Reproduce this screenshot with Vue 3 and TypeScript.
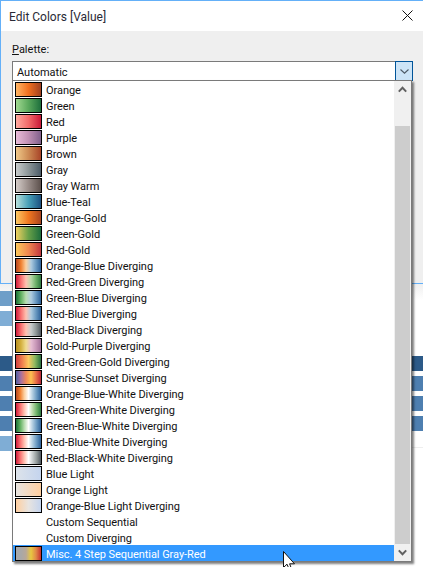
<template>
  <div class="screen">
    <section class="dialog">
      <header class="title-bar">
        <span class="title">Edit Colors [Value]</span>
        <svg class="close" width="11" height="11" viewBox="0 0 11 11">
          <path d="M0.5 0.5L10.5 10.5M10.5 0.5L0.5 10.5" stroke="#111" stroke-width="1" fill="none" />
        </svg>
      </header>
      <div class="body">
        <label class="field-label"><u>P</u>alette:</label>
        <div class="combo">
          <span class="combo-value">Automatic</span>
          <span class="combo-button">
            <svg width="9" height="5" viewBox="0 0 9 5">
              <path d="M0.5 0.5L4.5 4.2L8.5 0.5" stroke="#4d5a66" stroke-width="1.1" fill="none" />
            </svg>
          </span>
        </div>
      </div>
    </section>

    <div class="behind">
      <div v-for="(bar, i) in bars" :key="i" class="bar" :class="bar"></div>
    </div>

    <div class="dropdown">
      <ul class="rows">
        <li v-for="p in palettes" :key="p.name" class="row" :class="{ selected: p.name === selected }">
          <span v-if="p.colors.length" class="swatch" :style="{ background: gradient(p.colors) }"></span>
          <span v-else class="no-swatch"></span>
          <span class="row-name">{{ p.name }}</span>
        </li>
      </ul>
      <div class="scrollbar">
        <div class="arrow up">
          <svg width="9" height="7" viewBox="0 0 9 7">
            <path d="M0.8 5.6L4.5 1.8L8.2 5.6" stroke="#606060" stroke-width="2" fill="none" />
          </svg>
        </div>
        <div class="thumb"></div>
        <div class="arrow down">
          <svg width="9" height="7" viewBox="0 0 9 7">
            <path d="M0.8 1.4L4.5 5.2L8.2 1.4" stroke="#606060" stroke-width="2" fill="none" />
          </svg>
        </div>
      </div>
    </div>

    <svg class="pointer" width="14" height="20" viewBox="0 0 14 20">
      <path d="M0.5 0.5V16.5L4 13.2L6.5 19H9L6.6 12.8H11.5Z" fill="#fff" stroke="#111" stroke-width="1" />
    </svg>
  </div>
</template>

<script setup lang="ts">
interface Palette {
  name: string;
  colors: string[];
}

const selected = 'Misc. 4 Step Sequential Gray-Red';

const bars = ['light short', 'lighter short', 'gap', 'dark', 'mid', 'mid', 'mid', 'lighter short'];

const red = ['#d01c3c', '#f87070', '#ffc0b0'];
const green = ['#1c7038', '#60b060', '#b8dcb0'];
const orange = ['#b84820', '#f08030', '#fcd0a0'];
const blue = ['#b0cce0', '#6898c0', '#2c6098'];
const greenEnd = ['#b8d8a8', '#6cb068', '#2c7840'];
const grayEnd = ['#c8cccc', '#909898', '#505860'];

const palettes: Palette[] = [
  { name: 'Orange', colors: ['#ffb666', '#f07020', '#a04020'] },
  { name: 'Green', colors: ['#a0d890', '#5aa85c', '#1d6e3c'] },
  { name: 'Red', colors: ['#ffaaa0', '#f26a6a', '#c81838'] },
  { name: 'Purple', colors: ['#e8bcd8', '#c090b4', '#80608c'] },
  { name: 'Brown', colors: ['#f0c888', '#cc8a54', '#a84428'] },
  { name: 'Gray', colors: ['#c8cccc', '#8c9698', '#4c5c68'] },
  { name: 'Gray Warm', colors: ['#d4ccc8', '#988c88', '#5c504c'] },
  { name: 'Blue-Teal', colors: ['#b8e0dc', '#48a0b8', '#1c5080'] },
  { name: 'Orange-Gold', colors: ['#fcc864', '#f07820', '#a84420'] },
  { name: 'Green-Gold', colors: ['#f0d060', '#68a048', '#1c6c3c'] },
  { name: 'Red-Gold', colors: ['#fcc85c', '#f08850', '#c03840'] },
  { name: 'Orange-Blue Diverging', colors: [...orange, ...blue] },
  { name: 'Red-Green Diverging', colors: [...red, ...greenEnd] },
  { name: 'Green-Blue Diverging', colors: [...green, ...blue] },
  { name: 'Red-Blue Diverging', colors: [...red, ...blue] },
  { name: 'Red-Black Diverging', colors: [...red, ...grayEnd] },
  { name: 'Gold-Purple Diverging', colors: ['#b89020', '#d4b040', '#f0dc90', '#e8c0d4', '#c898b8', '#a07098'] },
  { name: 'Red-Green-Gold Diverging', colors: ['#d04040', '#f08050', '#fcc860', '#90b860', '#287040'] },
  { name: 'Sunrise-Sunset Diverging', colors: ['#5060a0', '#a870a0', '#f08858', '#fcc050', '#e87048', '#b82838'] },
  { name: 'Orange-Blue-White Diverging', colors: [...orange, '#ffffff', ...blue] },
  { name: 'Red-Green-White Diverging', colors: [...red, '#ffffff', ...greenEnd] },
  { name: 'Green-Blue-White Diverging', colors: [...green, '#ffffff', ...blue] },
  { name: 'Red-Blue-White Diverging', colors: [...red, '#ffffff', ...blue] },
  { name: 'Red-Black-White Diverging', colors: [...red, '#ffffff', ...grayEnd] },
  { name: 'Blue Light', colors: ['#dde3ea', '#c4d4ee'] },
  { name: 'Orange Light', colors: ['#e8e4e0', '#ffcfa0'] },
  { name: 'Orange-Blue Light Diverging', colors: ['#ffcfa0', '#e8e4e0', '#c4d4ee'] },
  { name: 'Custom Sequential', colors: [] },
  { name: 'Custom Diverging', colors: [] },
  { name: selected, colors: ['#a8a8a8', '#a8a8a8', '#b8a898', '#e8c840', '#e08848', '#c83030'] },
];

function gradient(colors: string[]): string {
  return `linear-gradient(to right, ${colors.join(', ')})`;
}
</script>

<style>
html,
body {
  margin: 0;
  background: #fff;
}
</style>

<style scoped>
.screen {
  position: relative;
  width: 423px;
  height: 567px;
  overflow: hidden;
  background: #fff;
  font-family: Roboto, "Open Sans", sans-serif;
  font-size: 11px;
  color: #111;
}

.dialog {
  height: 284px;
  box-sizing: border-box;
  border-top: 1px solid #64b0f8;
  border-left: 1px solid #64b0f8;
  border-bottom: 1px solid #64b0f8;
  background: #efefef;
}

.title-bar {
  height: 30px;
  background: #fff;
  display: flex;
  align-items: center;
  justify-content: space-between;
  padding: 0 10px 0 8px;
}

.title {
  font-size: 12px;
  color: #2a2a36;
  padding-top: 2px;
}

.close {
  margin-bottom: 1px;
}

.body {
  padding: 11px 10px 0 11px;
}

.field-label {
  display: block;
  height: 19px;
  line-height: 15px;
}

.combo {
  height: 20px;
  box-sizing: border-box;
  border: 1px solid #7a7a7a;
  background: #fff;
  display: flex;
  align-items: center;
  justify-content: space-between;
  padding-left: 4px;
}

.combo-value {
  padding-top: 2px;
}

.combo-button {
  width: 18px;
  height: 20px;
  margin-right: -1px;
  box-sizing: border-box;
  border: 1px solid #005499;
  background: #cce4f7;
  display: flex;
  align-items: center;
  justify-content: center;
}

.behind {
  display: flex;
  flex-direction: column;
  gap: 5px;
  padding-top: 7px;
  background: linear-gradient(to bottom, #efefef, #fff 16px);
  height: 164px;
  box-sizing: border-box;
  border-bottom: 1px solid #eee;
}

.bar {
  height: 15px;
  flex: none;
}

.bar.gap {
  height: 20px;
}

.bar.short {
  width: 100px;
}

.light {
  background: #6e9ec8;
}

.lighter {
  background: #7fadd5;
}

.dark {
  background: #2c5a88;
}

.mid {
  background: #4e7fb0;
}

.dropdown {
  position: absolute;
  left: 12px;
  top: 80px;
  width: 400px;
  height: 482px;
  box-sizing: border-box;
  border: 1px solid #7a7a7a;
  background: #fff;
  display: flex;
  box-shadow: 2px 2px 2px rgba(0, 0, 0, 0.5);
}

.rows {
  list-style: none;
  margin: 0;
  padding: 0;
  width: 381px;
  flex: none;
}

.row {
  height: 16px;
  display: flex;
  align-items: center;
  padding-left: 2px;
}

.row.selected {
  background: #3399ff;
  color: #fff;
}

.swatch,
.no-swatch {
  width: 27px;
  height: 15px;
  box-sizing: border-box;
  margin-right: 4px;
  flex: none;
}

.swatch {
  border: 1px solid #000;
}

.row-name {
  white-space: nowrap;
  padding-top: 2px;
  letter-spacing: -0.05px;
}

.scrollbar {
  flex: 1;
  display: flex;
  flex-direction: column;
  padding: 0 1px;
  background: #f0f0f0;
}

.arrow {
  display: flex;
  align-items: center;
  justify-content: center;
  flex: none;
}

.arrow.up {
  height: 45px;
  align-items: flex-start;
  padding-top: 5px;
  box-sizing: border-box;
}

.arrow.down {
  height: 17px;
}

.thumb {
  flex: 1;
  background: #cdcdcd;
}

.pointer {
  position: absolute;
  left: 283px;
  top: 551px;
}
</style>
